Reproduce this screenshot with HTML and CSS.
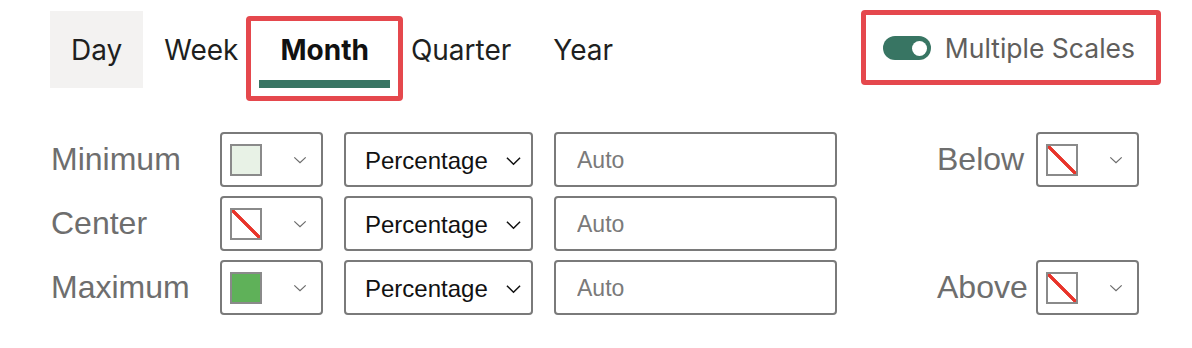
FILE: index.html
```html
<!DOCTYPE html>
<html lang="en">
<head>
  <meta charset="UTF-8" />
  <meta name="viewport" content="width=device-width, initial-scale=1.0"/>
  <title>Color Scale Settings</title>
  <link rel="stylesheet" href="styles.css">
</head>
<body>
  <div class="top-bar">
    <div class="tabs">
      <button type="button" class="tab hovered">Day</button>
      <button type="button" class="tab">Week</button>
      <button type="button" class="tab active">Month<span class="callout"></span></button>
      <button type="button" class="tab">Quarter</button>
      <button type="button" class="tab">Year</button>
    </div>
    <label class="toggle-wrap">
      <span class="toggle on"><span class="knob"></span></span>
      <span class="toggle-text">Multiple Scales</span>
      <span class="callout"></span>
    </label>
  </div>

  <div class="scale-form">
    <div class="scale-row">
      <span class="row-label">Minimum</span>
      <div class="color-pick">
        <span class="swatch light-green"></span>
        <svg class="chev small" viewBox="0 0 16 10"><path d="M1.5 2 L8 8 L14.5 2" /></svg>
      </div>
      <div class="select">
        <span>Percentage</span>
        <svg class="chev" viewBox="0 0 16 10"><path d="M1 1.5 L8 8.5 L15 1.5" /></svg>
      </div>
      <input class="value" type="text" placeholder="Auto" />
      <div class="side">
        <span class="row-label side-label">Below</span>
        <div class="color-pick">
          <span class="swatch none"></span>
          <svg class="chev small" viewBox="0 0 16 10"><path d="M1.5 2 L8 8 L14.5 2" /></svg>
        </div>
      </div>
    </div>

    <div class="scale-row">
      <span class="row-label">Center</span>
      <div class="color-pick">
        <span class="swatch none"></span>
        <svg class="chev small" viewBox="0 0 16 10"><path d="M1.5 2 L8 8 L14.5 2" /></svg>
      </div>
      <div class="select">
        <span>Percentage</span>
        <svg class="chev" viewBox="0 0 16 10"><path d="M1 1.5 L8 8.5 L15 1.5" /></svg>
      </div>
      <input class="value" type="text" placeholder="Auto" />
    </div>

    <div class="scale-row">
      <span class="row-label">Maximum</span>
      <div class="color-pick">
        <span class="swatch green"></span>
        <svg class="chev small" viewBox="0 0 16 10"><path d="M1.5 2 L8 8 L14.5 2" /></svg>
      </div>
      <div class="select">
        <span>Percentage</span>
        <svg class="chev" viewBox="0 0 16 10"><path d="M1 1.5 L8 8.5 L15 1.5" /></svg>
      </div>
      <input class="value" type="text" placeholder="Auto" />
      <div class="side">
        <span class="row-label side-label">Above</span>
        <div class="color-pick">
          <span class="swatch none"></span>
          <svg class="chev small" viewBox="0 0 16 10"><path d="M1.5 2 L8 8 L14.5 2" /></svg>
        </div>
      </div>
    </div>
  </div>
</body>
</html>
```

FILE: styles.css
```css
* {
  box-sizing: border-box;
}

body {
  margin: 0;
  background: #fff;
  font-family: "Liberation Sans", Arial, sans-serif;
  width: 1192px;
  height: 348px;
  overflow: hidden;
}

.top-bar {
  display: flex;
  justify-content: space-between;
  align-items: flex-start;
  padding: 11px 57px 0 50px;
}

.tabs {
  display: flex;
}

.tab {
  position: relative;
  height: 77px;
  padding: 8px 21px 0;
  border: none;
  border-bottom: 8px solid transparent;
  background: transparent;
  font-family: Inter, "Noto Sans", sans-serif;
  font-size: 28px;
  color: #201f1e;
  cursor: pointer;
}

.tab.hovered {
  background: #f3f2f1;
}

.tab.active {
  font-weight: 700;
  color: #111;
  border-bottom-color: #387563;
}

.callout {
  position: absolute;
  border: 5px solid #e5484d;
  border-radius: 4px;
  pointer-events: none;
}

.tab .callout {
  left: -13px;
  right: -13px;
  top: 5px;
  bottom: -21px;
}

.toggle-wrap {
  position: relative;
  display: flex;
  align-items: center;
  gap: 14px;
  margin-top: 21px;
  height: 32px;
  cursor: pointer;
}

.toggle-wrap .callout {
  left: -22px;
  right: -26px;
  top: -22px;
  bottom: -21px;
}

.toggle {
  width: 48px;
  height: 24px;
  border-radius: 12px;
  background: #387563;
  display: flex;
  align-items: center;
  justify-content: flex-end;
  padding-right: 4px;
}

.knob {
  width: 15px;
  height: 15px;
  border-radius: 50%;
  background: #fff;
}

.toggle-text {
  font-family: Inter, "Noto Sans", sans-serif;
  font-size: 26.5px;
  color: #605e5c;
}

.scale-form {
  display: flex;
  flex-direction: column;
  gap: 9px;
  margin-top: 44px;
  padding: 0 53px 0 51px;
}

.scale-row {
  display: flex;
  align-items: center;
  height: 55px;
}

.row-label {
  width: 169px;
  font-size: 32px;
  color: #6e6e6e;
}

.color-pick {
  width: 103px;
  height: 55px;
  border: 2px solid #7a7a7a;
  border-radius: 4px;
  display: flex;
  align-items: center;
  padding-left: 8px;
  background: #fff;
}

.swatch {
  width: 32px;
  height: 32px;
  border: 2px solid #8a8a8a;
  display: block;
}

.swatch.light-green {
  background: #e8f2e6;
}

.swatch.green {
  background: #5fb159;
}

.swatch.none {
  background: #fff linear-gradient(to top right, transparent calc(50% - 1.6px), #e8342a calc(50% - 1.4px), #e8342a calc(50% + 1.4px), transparent calc(50% + 1.6px));
}

.chev {
  width: 15px;
  height: 10px;
  fill: none;
  stroke: #111;
  stroke-width: 1.6;
}

.chev.small {
  margin-left: 31px;
  width: 14px;
  stroke: #6b6b6b;
  stroke-width: 1.4;
}

.select {
  width: 189px;
  height: 55px;
  margin-left: 21px;
  border: 2px solid #7a7a7a;
  border-radius: 4px;
  display: flex;
  align-items: center;
  justify-content: space-between;
  padding: 2px 10px 0 19px;
  font-size: 24px;
  color: #111;
}

.value {
  width: 283px;
  height: 55px;
  margin-left: 21px;
  border: 2px solid #7a7a7a;
  border-radius: 4px;
  padding: 2px 20px 0 21px;
  font-family: "Liberation Sans", Arial, sans-serif;
  font-size: 23px;
  color: #333;
  outline: none;
}

.value::placeholder {
  color: #7a7a7a;
}

.side {
  display: flex;
  align-items: center;
  margin-left: auto;
}

.side-label {
  width: 99px;
}
```
